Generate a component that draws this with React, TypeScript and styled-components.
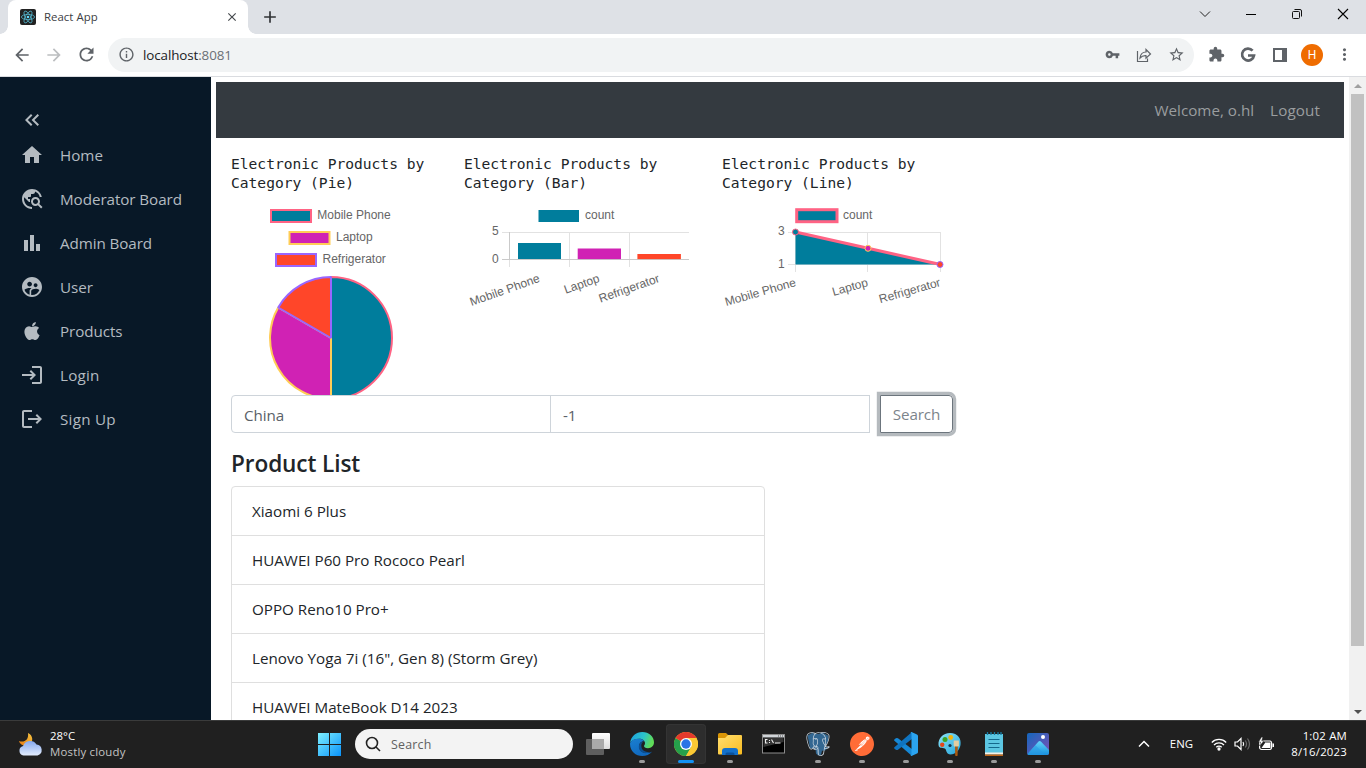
import React from "react";
import styled, { createGlobalStyle } from "styled-components";
import {
  MdHome,
  MdTravelExplore,
  MdBarChart,
  MdSupervisedUserCircle,
  MdLogin,
  MdLogout,
  MdKeyboardDoubleArrowLeft,
  MdArrowBack,
  MdArrowForward,
  MdRefresh,
  MdInfoOutline,
  MdVpnKey,
  MdStarBorder,
  MdExtension,
  MdMoreVert,
  MdClose,
  MdAdd,
} from "react-icons/md";
import { SiPostgresql, SiPostman } from "react-icons/si";

const TEAL = "#007d9c";
const MAGENTA = "#d022b4";
const ORANGE = "#ff4629";
const PINK = "#ff6384";
const YELLOW = "#ffcd56";
const PURPLE = "#9966ff";

const GlobalStyle = createGlobalStyle`
  *, *::before, *::after { box-sizing: border-box; }
  body { margin: 0; background: #fff; overflow: hidden; font-family: "Open Sans", "Noto Sans", sans-serif; }
  svg { display: block; flex: none; }
`;

const Screen = styled.div`
  width: 1366px;
  height: 768px;
  display: flex;
  flex-direction: column;
  overflow: hidden;
`;

/* ---------- browser chrome ---------- */

const TabStrip = styled.div`
  height: 34px;
  flex: none;
  display: flex;
  align-items: stretch;
  background: #dee1e6;
  padding-left: 8px;
`;

const Tab = styled.div`
  position: relative;
  width: 240px;
  display: flex;
  align-items: center;
  padding: 0 9px 0 12px;
  background: #fff;
  border-radius: 8px 8px 0 0;
  color: #45494d;
  &::before,
  &::after {
    content: "";
    position: absolute;
    bottom: 0;
    width: 8px;
    height: 8px;
  }
  &::before {
    left: -8px;
    background: radial-gradient(circle at 0 0, transparent 7.5px, #fff 8px);
  }
  &::after {
    right: -8px;
    background: radial-gradient(circle at 100% 0, transparent 7.5px, #fff 8px);
  }
`;

const TabTitle = styled.span`
  flex: 1;
  margin-left: 8px;
  padding-bottom: 2px;
  font-size: 11.4px;
  letter-spacing: 0.03px;
  color: #3c4043;
`;

const NewTab = styled.div`
  display: flex;
  align-items: center;
  margin-left: 12px;
  color: #303336;
`;

const WindowControls = styled.div`
  display: flex;
  margin-left: auto;
  padding-bottom: 6px;
`;

const WindowButton = styled.div`
  width: 46px;
  display: flex;
  align-items: center;
  justify-content: center;
`;

const Toolbar = styled.div`
  height: 43px;
  flex: none;
  display: flex;
  align-items: center;
  padding: 0 6px 1px 12px;
  background: #fff;
  border-bottom: 1px solid #dadce0;
  color: #5f6368;
`;

const ToolButton = styled.div<{ $dim?: boolean }>`
  width: 32px;
  display: flex;
  align-items: center;
  justify-content: center;
  color: ${(p) => (p.$dim ? "#bcbec0" : "#5f6368")};
`;

const NavButtons = styled.div`
  display: flex;
  width: 96px;
  margin-left: -6px;
  margin-right: 6px;
`;

const Omnibox = styled.div`
  width: 1086px;
  flex: none;
  height: 34px;
  display: flex;
  align-items: center;
  padding: 0 2px 0 10px;
  border-radius: 17px;
  background: #f1f3f4;
`;

const Url = styled.span`
  flex: 1;
  margin-left: 8px;
  font-size: 13.4px;
  letter-spacing: -0.1px;
  color: #202124;
`;

const Port = styled.span`
  color: #6b6f74;
`;

const Extensions = styled.div`
  display: flex;
  align-items: center;
  margin-left: 6px;
`;

const Avatar = styled.div`
  width: 22px;
  height: 22px;
  display: flex;
  align-items: center;
  justify-content: center;
  border-radius: 50%;
  background: #ef6c00;
  color: #fff;
  font: 400 12px Roboto, sans-serif;
`;

/* ---------- page ---------- */

const Page = styled.div`
  height: 643px;
  flex: none;
  display: flex;
  overflow: hidden;
`;

const Sidebar = styled.nav`
  width: 211px;
  flex: none;
  display: flex;
  flex-direction: column;
  padding: 31px 20px 0;
  background: #081827;
  color: #b4bbc1;
`;

const CollapseRow = styled.div`
  height: 25px;
  display: flex;
  align-items: flex-start;
`;

const SideItem = styled.a`
  height: 44px;
  display: flex;
  align-items: center;
  gap: 16px;
  font-size: 15.2px;
  white-space: nowrap;
`;

const SideLabel = styled.span<{ $ls: number }>`
  letter-spacing: ${(p) => p.$ls}px;
`;

const Main = styled.main`
  flex: 1;
  min-width: 0;
  padding: 5px 5px 0;
  overflow: hidden;
`;

const Navbar = styled.header`
  height: 56px;
  display: flex;
  align-items: center;
  justify-content: flex-end;
  gap: 16px;
  padding-right: 24px;
  background: #343a40;
  color: #9a9d9f;
  font-size: 15.2px;
`;

const NavText = styled.span<{ $ls: number }>`
  letter-spacing: ${(p) => p.$ls}px;
`;

const Content = styled.div`
  padding-left: 15px;
`;

const Charts = styled.section`
  height: 257px;
  display: flex;
  padding-top: 16px;
  overflow: hidden;
`;

const ChartCard = styled.article<{ $w: number }>`
  width: ${(p) => p.$w}px;
  flex: none;
`;

const ChartTitle = styled.h2`
  width: 215px;
  height: 40px;
  margin: 0;
  font: 400 14.6px/19.2px "DejaVu Sans Mono", monospace;
  color: #212529;
`;

const ChartText = styled.text`
  font: 12px "Liberation Sans", Arial, sans-serif;
  fill: #666;
`;

const SearchRow = styled.form`
  display: flex;
  height: 38px;
`;

const Field = styled.div<{ $first?: boolean }>`
  width: 320px;
  height: 38px;
  padding: 0 12px;
  margin-left: ${(p) => (p.$first ? 0 : -1)}px;
  border: 1px solid #ced4da;
  border-radius: ${(p) => (p.$first ? "4px 0 0 4px" : "0")};
  font-size: 15.2px;
  line-height: 38px;
  letter-spacing: -0.1px;
  color: #5a6168;
`;

const SearchButton = styled.div`
  width: 73px;
  height: 38px;
  margin-left: 10px;
  border: 1px solid #6c757d;
  border-radius: 0 4px 4px 0;
  box-shadow: 0 0 0 3.2px rgba(108, 117, 125, 0.5);
  text-align: center;
  font-size: 15.2px;
  line-height: 36px;
  letter-spacing: -0.1px;
  color: #7c848b;
`;

const ListTitle = styled.h4`
  height: 29px;
  margin: 16px 0 8px;
  font-size: 22.6px;
  font-weight: 600;
  line-height: 29px;
  letter-spacing: -0.1px;
  color: #212529;
`;

const List = styled.ul`
  width: 534px;
  margin: 0;
  padding: 0;
  list-style: none;
  border: 1px solid #dfdfdf;
  border-radius: 4px;
`;

const ListItem = styled.li`
  height: 49px;
  padding: 0 20px;
  border-bottom: 1px solid #dfdfdf;
  font-size: 15.2px;
  line-height: 49px;
  color: #212529;
`;

const Scrollbar = styled.div`
  width: 17px;
  flex: none;
  display: flex;
  flex-direction: column;
  align-items: center;
  background: #f1f1f1;
`;

const ScrollArrow = styled.div`
  height: 17px;
  display: flex;
  align-items: center;
`;

const Thumb = styled.div`
  width: 13px;
  height: 552px;
  margin-bottom: auto;
  background: #c1c1c1;
`;

/* ---------- taskbar ---------- */

const Taskbar = styled.footer`
  height: 48px;
  flex: none;
  display: flex;
  align-items: center;
  background: #202020;
  border-top: 1px solid #3a3b3b;
  padding-bottom: 1px;
  color: #fff;
`;

const Weather = styled.div`
  width: 308px;
  display: flex;
  align-items: center;
  padding-left: 18px;
  gap: 7px;
  font-size: 11.4px;
  line-height: 16px;
`;

const Muted = styled.div`
  color: #c4c4c4;
  letter-spacing: 0.2px;
`;

const Slot = styled.div<{ $active?: boolean }>`
  position: relative;
  width: 40px;
  height: 40px;
  margin: 0 2px;
  display: flex;
  align-items: center;
  justify-content: center;
  border-radius: 4px;
  background: ${(p) => (p.$active ? "#2d2d2d" : "transparent")};
  box-shadow: ${(p) => (p.$active ? "inset 0 0 0 1px #343434" : "none")};
`;

const Indicator = styled.div<{ $active?: boolean }>`
  position: absolute;
  bottom: 1px;
  left: 50%;
  transform: translateX(-50%);
  width: ${(p) => (p.$active ? 16 : 6)}px;
  height: 3px;
  border-radius: 2px;
  background: ${(p) => (p.$active ? "#1292f4" : "#9a9a9a")};
`;

const TaskSearch = styled.div`
  width: 218px;
  height: 30px;
  margin: 0 3px;
  display: flex;
  align-items: center;
  gap: 10px;
  padding-left: 10px;
  border-radius: 15px;
  background: #f3f3f3;
  color: #616161;
  font-size: 12.4px;
  letter-spacing: 0.2px;
`;

const Layers = styled.div`
  display: grid;
  & > * {
    grid-area: 1 / 1;
  }
`;

const Tray = styled.div`
  display: flex;
  align-items: center;
  margin-left: auto;
  padding-right: 19px;
  font-size: 11.4px;
  line-height: 16px;
`;

const Language = styled.span`
  margin: 0 18px 0 20px;
`;

const TrayIcons = styled.div`
  display: flex;
  align-items: center;
  gap: 7px;
`;

const Clock = styled.div`
  width: 80px;
  margin-left: -8px;
  text-align: right;
  letter-spacing: 0.2px;
`;

/* ---------- drawings ---------- */

const AppleIcon = ({ size = 24 }: { size?: number }) => (
  <svg width={size} height={size} viewBox="0 0 24 24" fill="currentColor">
    <path d="M17.050 20.280c-.98.950-2.050.8-3.080.350-1.090-.460-2.090-.480-3.240 0-1.440.620-2.200.440-3.060-.350C2.790 15.250 3.510 7.590 9.050 7.310c1.350.070 2.290.740 3.080.8 1.180-.240 2.310-.930 3.570-.840 1.510.120 2.650.720 3.400 1.800-3.120 1.870-2.380 5.980.480 7.130-.570 1.500-1.310 2.990-2.540 4.090zM12.030 7.250c-.150-2.230 1.660-4.070 3.740-4.250.290 2.580-2.340 4.500-3.740 4.250z" />
  </svg>
);

const ReactFavicon = () => (
  <svg width="16" height="16" viewBox="0 0 16 16">
    <rect width="16" height="16" rx="2" fill="#222" />
    <g fill="none" stroke="#53b5cc" strokeWidth=".8">
      <ellipse cx="8" cy="8" rx="6.6" ry="2.6" />
      <ellipse cx="8" cy="8" rx="6.6" ry="2.6" transform="rotate(60 8 8)" />
      <ellipse cx="8" cy="8" rx="6.6" ry="2.6" transform="rotate(120 8 8)" />
    </g>
    <circle cx="8" cy="8" r="1.3" fill="#61dafb" />
  </svg>
);

const PieChart = () => (
  <svg width="215" height="201" viewBox="231 194 215 201">
    <g strokeWidth="2">
      <rect x="271" y="210" width="40" height="12" fill={TEAL} stroke={PINK} />
      <rect x="289.5" y="232" width="40" height="12" fill={MAGENTA} stroke={YELLOW} />
      <rect x="276" y="254" width="40" height="12" fill={ORANGE} stroke={PURPLE} />
      <path d="M331 338V277a61 61 0 0 1 0 122z" fill={TEAL} stroke={PINK} />
      <path d="M331 338V399A61 61 0 0 1 278.2 307.5z" fill={MAGENTA} stroke={YELLOW} strokeLinejoin="bevel" />
      <path d="M331 338L278.2 307.5A61 61 0 0 1 331 277z" fill={ORANGE} stroke={PURPLE} strokeLinejoin="bevel" />
    </g>
    <ChartText x="317.3" y="219">Mobile Phone</ChartText>
    <ChartText x="336" y="241">Laptop</ChartText>
    <ChartText x="322.5" y="263">Refrigerator</ChartText>
  </svg>
);

const BarChart = () => (
  <svg width="250" height="201" viewBox="464 194 250 201">
    <rect x="538.5" y="210" width="40.5" height="12" fill={TEAL} />
    <ChartText x="585" y="219">count</ChartText>
    <g stroke="#e2e2e2">
      <path d="M502 232.5H689M569.5 232V267M629.5 232V267" />
      <path d="M502 259.5H689M509.5 232V260" stroke="#cacaca" />
      <path d="M509.5 260V267" />
    </g>
    <rect x="518" y="243" width="43" height="16" fill={TEAL} />
    <rect x="577.7" y="248.5" width="43.3" height="10.6" fill={MAGENTA} />
    <rect x="637.4" y="254" width="43.5" height="5.1" fill={ORANGE} />
    <ChartText x="498.8" y="235" textAnchor="end">5</ChartText>
    <ChartText x="498.8" y="263" textAnchor="end">0</ChartText>
    <ChartText textAnchor="end" transform="translate(540.6 281.6) rotate(-19.5)">Mobile Phone</ChartText>
    <ChartText textAnchor="end" transform="translate(600.4 281.6) rotate(-19.5)">Laptop</ChartText>
    <ChartText textAnchor="end" transform="translate(660.2 281.6) rotate(-19.5)">Refrigerator</ChartText>
  </svg>
);

const LineChart = () => (
  <svg width="250" height="201" viewBox="722 194 250 201">
    <rect x="796.7" y="209.7" width="40.3" height="12" fill={TEAL} stroke={PINK} strokeWidth="3" />
    <ChartText x="843" y="219">count</ChartText>
    <path d="M788 232.5H941M788 264.5H941M795.5 232V272M867.5 232V272M940.5 232V272" stroke="#e2e2e2" />
    <path d="M795.5 232L868 248.3L940.5 264.5H795.5z" fill={TEAL} />
    <path d="M795.5 232L868 248.3L940.5 264.5" fill="none" stroke={PINK} strokeWidth="3" />
    <circle cx="795.5" cy="232" r="3" fill={TEAL} stroke={PINK} />
    <circle cx="868" cy="248.3" r="3" fill={MAGENTA} stroke={YELLOW} />
    <circle cx="940" cy="264.5" r="3" fill={ORANGE} stroke={PURPLE} />
    <ChartText x="784.8" y="235" textAnchor="end">3</ChartText>
    <ChartText x="784.8" y="268" textAnchor="end">1</ChartText>
    <ChartText textAnchor="end" transform="translate(796.7 285.8) rotate(-16)">Mobile Phone</ChartText>
    <ChartText textAnchor="end" transform="translate(868.7 285.8) rotate(-16)">Laptop</ChartText>
    <ChartText textAnchor="end" transform="translate(941.2 285.8) rotate(-16)">Refrigerator</ChartText>
  </svg>
);

const WeatherIcon = () => (
  <svg width="25" height="25" viewBox="0 0 25 25">
    <defs>
      <linearGradient id="cloud" x2="0" y2="1">
        <stop stopColor="#86a9ee" />
        <stop offset="1" stopColor="#e3ecfd" />
      </linearGradient>
      <linearGradient id="moon" x1="1" x2="0" y2="1">
        <stop stopColor="#f6c643" />
        <stop offset="1" stopColor="#e8790c" />
      </linearGradient>
    </defs>
    <path d="M10 1c5 2 6 9 1 12C7 15 2 13 1 9c5 2 10-1 9-8z" fill="url(#moon)" />
    <path d="M5.500 23.500a4.800 4.800 0 0 1-.4-9.400A7.500 7.500 0 0 1 18.500 12.500 5.600 5.600 0 0 1 19.500 23.500z" fill="url(#cloud)" />
  </svg>
);

const WindowsLogo = () => (
  <svg width="24" height="24" viewBox="0 0 24 24">
    <defs>
      <linearGradient id="win" x2="1" y2="1">
        <stop stopColor="#7df0ff" />
        <stop offset="1" stopColor="#0a93fb" />
      </linearGradient>
    </defs>
    <path d="M0 1h11v11H0zM12 1h11v11H12zM0 13h11v11H0zM12 13h11v11H12z" fill="url(#win)" />
  </svg>
);

const TaskView = () => (
  <svg width="24" height="24" viewBox="0 0 24 24">
    <defs>
      <linearGradient id="tv" x2="0" y2="1">
        <stop stopColor="#fff" />
        <stop offset="1" stopColor="#dcdcdc" />
      </linearGradient>
    </defs>
    <rect x="6" y="1" width="18" height="16" rx="1" fill="url(#tv)" />
    <rect x="0" y="7" width="18" height="16" rx="1" fill="#5f5f5f" />
    <path d="M6 7h12v10H6z" fill="#aaa" />
  </svg>
);

const EdgeLogo = () => (
  <svg width="24" height="24" viewBox="0 0 24 24">
    <defs>
      <linearGradient id="ed1" x1="0" x2="1" y2=".3">
        <stop stopColor="#1b9de2" />
        <stop offset=".6" stopColor="#2cc4ca" />
        <stop offset="1" stopColor="#60dc58" />
      </linearGradient>
      <linearGradient id="ed2" x2=".5" y2="1">
        <stop stopColor="#1a7fd0" />
        <stop offset="1" stopColor="#1068bd" />
      </linearGradient>
    </defs>
    <path d="M.1 11C.8 4.500 6 0 12.300 0 19 0 24 4.700 24 10.300c0 3.500-2.700 5.900-6 5.900-2.800 0-4-1.200-4-2.100 0-.8 1-1.100 1-3 0-2.400-2.500-4.400-5.600-4.400C4.600 6.700 1.400 8.300.1 11z" fill="url(#ed1)" />
    <path d="M.1 11C1.400 8 5.200 6.500 9.300 6.700c2.500.1 4.300 1.300 5.100 2.600-2.600-.6-5.400 1.700-5.400 4.900 0 4 3.600 6.900 8 6.900 2 0 3.800-.6 5-1.400C19.800 22.500 16 24 12.300 24 5.500 24-.6 18.500.1 11z" fill="url(#ed2)" />
    <path d="M9.200 12.500C7.500 18 12 22 17 21.100c2-.3 3.800-.8 5-1.400-3.800 1.200-10.700.300-10.700-6.200 0-1.600.8-3 2-3.800-1.600-.1-3.400.900-4.100 2.800z" fill="#0c4f91" />
  </svg>
);

const ChromeLogo = () => (
  <svg width="24" height="24" viewBox="0 0 24 24">
    <circle cx="12" cy="12" r="12" fill="#fcc934" />
    <path d="M12 12L1.600 6A12 12 0 0 0 12 24l5.200-9z" fill="#25a04b" />
    <path d="M12 12L1.600 6A12 12 0 0 1 22.400 6H12z" fill="#e5392c" />
    <path d="M22.400 6H12l5.200 9L12 24A12 12 0 0 0 22.400 6z" fill="#fcc934" />
    <circle cx="12" cy="12" r="6" fill="#fff" />
    <circle cx="12" cy="12" r="4.700" fill="#2a74e6" />
  </svg>
);

const FolderIcon = () => (
  <svg width="24" height="24" viewBox="0 0 24 24">
    <defs>
      <linearGradient id="fold" x2="1" y2="1">
        <stop stopColor="#ffdf70" />
        <stop offset="1" stopColor="#f9bb20" />
      </linearGradient>
    </defs>
    <path d="M0 2.500Q0 1 1.500 1H8l2.500 2.500L8 6H0z" fill="#d99506" />
    <path d="M0 6h7l3-3h13q1 0 1 1v17.500q0 1-1 1H1q-1 0-1-1z" fill="url(#fold)" />
    <path d="M4 23v-4q0-3 3-3h10q3 0 3 3v4z" fill="#1371cb" />
    <path d="M7.500 23v-1q0-1.500 1.500-1.500h6q1.500 0 1.500 1.500v1z" fill="#0a529d" />
  </svg>
);

const TerminalIcon = () => (
  <svg width="24" height="24" viewBox="0 0 24 24">
    <rect x=".5" y="2.500" width="22" height="18.500" fill="#000" stroke="#8c8c8c" />
    <path d="M1 3h21v2.500H1z" fill="#d0d4d8" />
    <path d="M16 4h5" stroke="#555" strokeDasharray="1 1" />
    <path d="M1.500 6h20v4l-20 5z" fill="#333" />
    <path d="M5.500 7.500H3.500v3.500h2M7.500 8v1M7.500 10v1M9.500 7.500l2 3.500M13 11h5.500" fill="none" stroke="#eee" strokeWidth="1.100" />
  </svg>
);

const ElephantBody = () => (
  <svg width="24" height="24" viewBox="0 0 24 24">
    <path d="M1.500 3.500L6 1l5.500 1L17 .7l5.500 3L22 9l-2.500 6 3 .5-3.500 3-3 .3-1 4-3 .7-2-2-.6-5L7 17l-3-1z" fill="#336791" />
  </svg>
);

const VsCodeLogo = () => (
  <svg width="24" height="24" viewBox="0 0 24 24">
    <path d="M1.800 6.300L.4 7.600q-.6.600 0 1.200L18 24l.5-6.500L4 6.300q-1-.7-2.200 0z" fill="#1688d6" />
    <path d="M1.800 17.700L.4 16.400q-.6-.6 0-1.200L18 0l.5 6.500L4 17.700q-1 .7-2.200 0z" fill="#0f74c0" />
    <path d="M17.500 0L23 2.400q1 .5 1 1.600v16q0 1.100-1 1.600L17.500 24q-.8 0-1-.700 1 .2 1-1V1.700q0-1.200-1-1 .2-.7 1-.7z" fill="#2ba4f0" />
  </svg>
);

const PaintIcon = () => (
  <svg width="24" height="24" viewBox="0 0 24 24">
    <defs>
      <linearGradient id="pal" x2="1" y2="1">
        <stop stopColor="#8ce4f7" />
        <stop offset="1" stopColor="#23a5dd" />
      </linearGradient>
    </defs>
    <path d="M12 1C20 1 23.500 7 22.500 13c-.8 5-5 9.500-10 9.500-4 0-4-4-5-5.500C6.300 15 1 17.500.5 13 0 6 5 1 12 1z" fill="url(#pal)" />
    <circle cx="7" cy="7.500" r="2.500" fill="#3da524" />
    <circle cx="12.700" cy="5.500" r="2.400" fill="#f4b30b" />
    <circle cx="4.200" cy="12.700" r="2.200" fill="#e3471b" />
    <circle cx="12" cy="13.500" r="1.600" fill="#15334a" />
    <path d="M15.700 8.500h5.200v5.200q-.5 1.300-2.600 1.300-2 0-2.600-1.300z" fill="#e3cda1" />
    <path d="M17 14.500h2.800l-.2 9q-1.200 1-2.400 0z" fill="#a85a13" />
  </svg>
);

const NotepadIcon = () => (
  <svg width="24" height="24" viewBox="0 0 24 24">
    <path d="M3 2h18v20.500H3z" fill="#5cc6e2" />
    <path d="M3 20.500h18v2H3z" fill="#f5f0e6" />
    <path d="M3 22.500h18v1.500H3z" fill="#c06518" />
    <path d="M6.500 7.500h11M6.500 11.500h11M6.500 15.500h11" stroke="#14688c" strokeWidth="1.200" />
    <path d="M5.500 0v3M9 0v3M12.500 0v3M16 0v3M19 0v3" stroke="#167ba2" strokeWidth="1.300" />
  </svg>
);

const PhotosIcon = () => (
  <svg width="24" height="24" viewBox="0 0 24 24">
    <defs>
      <linearGradient id="ph" x2="1" y2="1">
        <stop stopColor="#1467bd" />
        <stop offset="1" stopColor="#7e51b4" />
      </linearGradient>
      <linearGradient id="hill" x2="0" y2="1">
        <stop stopColor="#63d6fa" />
        <stop offset="1" stopColor="#1790dd" />
      </linearGradient>
    </defs>
    <rect x="1" y="1" width="22" height="22" rx="2" fill="url(#ph)" />
    <path d="M1.500 22L12.500 9.500q1.200-1 2.400 0L23 18v3q0 2-2 2H3q-1 0-1.500-1z" fill="url(#hill)" />
    <path d="M1.500 22l8-8.700L19 23H3q-1 0-1.500-1z" fill="#2999e3" opacity=".5" />
    <circle cx="17" cy="5" r="2" fill="#fff" />
  </svg>
);

const sideItems: [React.ComponentType<{ size?: number }>, string, number][] = [
  [MdHome, "Home", 0],
  [MdTravelExplore, "Moderator Board", -0.06],
  [MdBarChart, "Admin Board", -0.08],
  [MdSupervisedUserCircle, "User", 0],
  [AppleIcon, "Products", -0.08],
  [MdLogin, "Login", 0.2],
  [MdLogout, "Sign Up", 0.25],
];

const products = [
  "Xiaomi 6 Plus",
  "HUAWEI P60 Pro Rococo Pearl",
  "OPPO Reno10 Pro+",
  'Lenovo Yoga 7i (16", Gen 8) (Storm Grey)',
  "HUAWEI MateBook D14 2023",
];

export default function App() {
  return (
    <Screen>
      <GlobalStyle />
      <TabStrip>
        <Tab>
          <ReactFavicon />
          <TabTitle>React App</TabTitle>
          <MdClose size={14} />
        </Tab>
        <NewTab>
          <MdAdd size={20} />
        </NewTab>
        <WindowControls>
          <WindowButton>
            <svg width="12" height="12" viewBox="0 0 12 12"><path d="M1 3.500l5 5 5-5" fill="none" stroke="#222" /></svg>
          </WindowButton>
          <WindowButton>
            <svg width="12" height="12" viewBox="0 0 12 12"><path d="M1 6.500h10" stroke="#000" /></svg>
          </WindowButton>
          <WindowButton>
            <svg width="12" height="12" viewBox="0 0 12 12" fill="none" stroke="#111"><rect x="1.500" y="3.500" width="7" height="7" rx="1" /><path d="M3.500 1.500H9q1.500 0 1.500 1.500v5.500" /></svg>
          </WindowButton>
          <WindowButton>
            <svg width="12" height="12" viewBox="0 0 12 12"><path d="M1 1l10 10M11 1L1 11" stroke="#000" strokeWidth="1.100" /></svg>
          </WindowButton>
        </WindowControls>
      </TabStrip>
      <Toolbar>
        <NavButtons>
          <ToolButton><MdArrowBack size={20} /></ToolButton>
          <ToolButton $dim><MdArrowForward size={20} /></ToolButton>
          <ToolButton><MdRefresh size={21} /></ToolButton>
        </NavButtons>
        <Omnibox>
          <MdInfoOutline size={17} />
          <Url>localhost<Port>:8081</Port></Url>
          <ToolButton><MdVpnKey size={15} /></ToolButton>
          <ToolButton>
            <svg width="16" height="16" viewBox="0 0 16 16" fill="none" stroke="#5f6368" strokeWidth="1.200"><path d="M1.500 4v10.500h10v-3M4 11c.5-4 3-6 6-6V2.500L14.500 7 10 11.200V8.700C7.500 8.500 5.500 9.300 4 11z" /></svg>
          </ToolButton>
          <ToolButton><MdStarBorder size={17} /></ToolButton>
        </Omnibox>
        <Extensions>
          <ToolButton><MdExtension size={17} /></ToolButton>
          <ToolButton>
            <svg width="16" height="16" viewBox="0 0 16 16" fill="none" stroke="#5f6368" strokeWidth="2.700"><path d="M12.600 3.600A6 6 0 1 0 14 8.500H8" /></svg>
          </ToolButton>
          <ToolButton>
            <svg width="14" height="14" viewBox="0 0 14 14"><rect x="1" y="1" width="12" height="12" fill="none" stroke="#5f6368" strokeWidth="2" /><path d="M9 1h4v12H9z" fill="#5f6368" /></svg>
          </ToolButton>
          <ToolButton><Avatar>H</Avatar></ToolButton>
          <ToolButton><MdMoreVert size={19} /></ToolButton>
        </Extensions>
      </Toolbar>

      <Page>
        <Sidebar>
          <CollapseRow>
            <MdKeyboardDoubleArrowLeft size={24} />
          </CollapseRow>
          {sideItems.map(([Icon, label, ls]) => (
            <SideItem key={label}>
              <Icon size={24} />
              <SideLabel $ls={ls}>{label}</SideLabel>
            </SideItem>
          ))}
        </Sidebar>
        <Main>
          <Navbar>
            <NavText $ls={0}>Welcome, o.hl</NavText>
            <NavText $ls={0.12}>Logout</NavText>
          </Navbar>
          <Content>
            <Charts>
              <ChartCard $w={233}>
                <ChartTitle>Electronic Products by Category (Pie)</ChartTitle>
                <PieChart />
              </ChartCard>
              <ChartCard $w={258}>
                <ChartTitle>Electronic Products by Category (Bar)</ChartTitle>
                <BarChart />
              </ChartCard>
              <ChartCard $w={258}>
                <ChartTitle>Electronic Products by Category (Line)</ChartTitle>
                <LineChart />
              </ChartCard>
            </Charts>
            <SearchRow>
              <Field $first>China</Field>
              <Field>-1</Field>
              <SearchButton>Search</SearchButton>
            </SearchRow>
            <ListTitle>Product List</ListTitle>
            <List>
              {products.map((name) => (
                <ListItem key={name}>{name}</ListItem>
              ))}
            </List>
          </Content>
        </Main>
        <Scrollbar>
          <ScrollArrow>
            <svg width="8" height="4" viewBox="0 0 8 4"><path d="M0 4l4-4 4 4z" fill="#a0a0a0" /></svg>
          </ScrollArrow>
          <Thumb />
          <ScrollArrow>
            <svg width="8" height="4" viewBox="0 0 8 4"><path d="M0 0l4 4 4-4z" fill="#505050" /></svg>
          </ScrollArrow>
        </Scrollbar>
      </Page>

      <Taskbar>
        <Weather>
          <WeatherIcon />
          <div>
            <div>28°C</div>
            <Muted>Mostly cloudy</Muted>
          </div>
        </Weather>
        <Slot><WindowsLogo /></Slot>
        <TaskSearch>
          <svg width="16" height="16" viewBox="0 0 16 16" fill="none" stroke="#222" strokeWidth="1.600"><circle cx="7" cy="7" r="5.500" /><path d="M11 11l4 4" /></svg>
          Search
        </TaskSearch>
        <Slot><TaskView /></Slot>
        <Slot><EdgeLogo /><Indicator /></Slot>
        <Slot $active><ChromeLogo /><Indicator $active /></Slot>
        <Slot><FolderIcon /><Indicator /></Slot>
        <Slot><TerminalIcon /></Slot>
        <Slot>
          <Layers>
            <ElephantBody />
            <SiPostgresql size={24} color="#c9d5df" />
          </Layers>
          <Indicator />
        </Slot>
        <Slot>
          <Layers>
            <svg width="24" height="24" viewBox="0 0 24 24"><circle cx="12" cy="12" r="11" fill="#fff" /></svg>
            <SiPostman size={24} color="#ff6c37" />
          </Layers>
          <Indicator />
        </Slot>
        <Slot><VsCodeLogo /><Indicator /></Slot>
        <Slot><PaintIcon /><Indicator /></Slot>
        <Slot><NotepadIcon /><Indicator /></Slot>
        <Slot><PhotosIcon /><Indicator /></Slot>
        <Tray>
          <svg width="12" height="12" viewBox="0 0 12 12" fill="none" stroke="#fff" strokeWidth="1.500"><path d="M1 8.500l5-5 5 5" /></svg>
          <Language>ENG</Language>
          <TrayIcons>
            <svg width="16" height="14" viewBox="0 0 16 14" fill="none" stroke="#fff" strokeWidth="1.300"><path d="M.8 5.500a10 10 0 0 1 14.400 0M3 8a7 7 0 0 1 10 0M5.300 10.300a3.800 3.800 0 0 1 5.400 0" /><circle cx="8" cy="12" r="1" fill="#fff" /></svg>
            <svg width="17" height="14" viewBox="0 0 17 14" fill="none" stroke="#fff" strokeWidth="1.200"><path d="M1 5h2.500L7 1.500v11L3.500 9H1zM9 5q1.300 2 0 4" /><path d="M11.300 3.500q2.500 3.500 0 7M13.500 1.500q4 5.500 0 11" stroke="#6a6a6a" /></svg>
            <svg width="17" height="14" viewBox="0 0 17 14"><rect x="1.600" y="4" width="12" height="8.500" rx="2" fill="none" stroke="#fff" strokeWidth="1.200" /><path d="M7 5.500h5.500v5.500h-9L7 6zM14.500 6.500H16v3.500h-1.500z" fill="#fff" /><path d="M3.500 0L.5 5h2L1.500 9l4.500-5H3.800l1-4z" fill="#fff" stroke="#202020" strokeWidth=".5" /></svg>
          </TrayIcons>
          <Clock>
            <div>1:02 AM</div>
            <div>8/16/2023</div>
          </Clock>
        </Tray>
      </Taskbar>
    </Screen>
  );
}
